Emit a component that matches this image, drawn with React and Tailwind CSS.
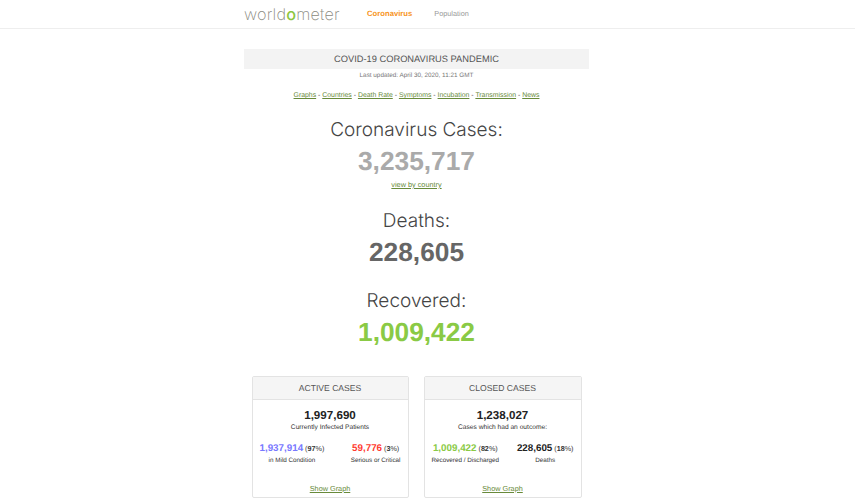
const sans = { fontFamily: '"Liberation Sans", Arial, sans-serif' };

const links = ["Graphs", "Countries", "Death Rate", "Symptoms", "Incubation", "Transmission", "News"];

const Counter = ({ title, value, color, className = "" }) => (
    <div className={`flex flex-col items-center ${className}`}>
        <h1 className="font-['Inter'] text-[19px] leading-[22px] font-light text-[#444]">{title}</h1>
        <div className={`mt-[4px] text-[26.3px] leading-[32px] font-bold ${color}`}>{value}</div>
    </div>
);

const Stat = ({ value, pct, color, label, className = "" }) => (
    <div className={`flex flex-col items-center ${className}`}>
        <div className="text-[7.2px] leading-[12px] whitespace-nowrap text-[#333]">
            <span className={`text-[9.8px] font-bold ${color}`}>{value}</span> (<b>{pct}</b>%)
        </div>
        <div className="mt-[1px] text-[6.3px] leading-[9px] whitespace-nowrap text-[#333]">{label}</div>
    </div>
);

const Panel = ({ title, total, sub, children, className = "" }) => (
    <div className={`flex h-[122px] flex-col rounded-[2px] border border-[#e3e3e3] ${className}`}>
        <div className="flex h-[23px] items-center justify-center border-b border-[#e3e3e3] bg-[#f5f5f5] text-[8.6px] text-[#555]">
            {title}
        </div>
        <div className="flex flex-1 flex-col items-center pt-[8px]">
            <div className="text-[11.6px] leading-[15px] font-bold text-[#222]">{total}</div>
            <div className="text-[6.65px] leading-[10px] text-[#333]">{sub}</div>
            <div className="mt-[10px] flex w-full justify-between px-[7px]">{children}</div>
            <a className="mt-auto mb-[3px] text-[7.3px] leading-[10px] text-[#688a3a] underline">Show Graph</a>
        </div>
    </div>
);

export default function App() {
    return (
        <div className="h-[504px] w-[855px] overflow-hidden bg-white [text-rendering:geometricPrecision]" style={sans}>
            {/* Navbar */}
            <div className="h-[29px] border-b border-[#eeeeee]">
                <div className="ml-[244px] flex h-[28px] items-center">
                    <div className="w-[123px] font-['Inter'] text-[16.2px] leading-none font-extralight tracking-[0.2px] text-[#8a8a80]">
                        world<span className="font-medium text-[#8dc63f]">o</span>meter
                    </div>
                    <a className="text-[7.7px] font-bold text-[#f7941d]">Coronavirus</a>
                    <a className="ml-[22px] text-[7.3px] text-[#999]">Population</a>
                </div>
            </div>

            <main className="ml-[244px] flex w-[345px] flex-col items-center pt-[20px]">
                <div className="flex h-[20px] w-full items-center justify-center bg-[#f3f3f3] pt-[1px] text-[9.3px] text-[#555]">
                    COVID-19 CORONAVIRUS PANDEMIC
                </div>
                <div className="mt-[2px] text-[6.35px] leading-[10px] text-[#777]">Last updated: April 30, 2020, 11:21 GMT</div>

                <div className="mt-[10px] text-[6.9px] leading-[10px] text-[#333]">
                    {links.map((link, i) => (
                        <span key={link}>
                            {i > 0 && " - "}
                            <a className="text-[#688a3a] underline">{link}</a>
                        </span>
                    ))}
                </div>

                <Counter className="mt-[18px]" title="Coronavirus Cases:" value="3,235,717" color="text-[#aaaaaa]" />
                <a className="mt-[3px] text-[7.3px] leading-[10px] text-[#688a3a] underline">view by country</a>
                <Counter className="mt-[20px]" title="Deaths:" value="228,605" color="text-[#666666]" />
                <Counter className="mt-[22px]" title="Recovered:" value="1,009,422" color="text-[#8aca45]" />

                <div className="mt-[28px] flex w-full justify-center gap-[15px]">
                    <Panel className="w-[157px]" title="ACTIVE CASES" total="1,997,690" sub="Currently Infected Patients">
                        <Stat value="1,937,914" pct="97" color="text-[#7878ff]" label="in Mild Condition" />
                        <Stat value="59,776" pct="3" color="text-[#ff3b30]" label="Serious or Critical" />
                    </Panel>
                    <Panel className="w-[158px]" title="CLOSED CASES" total="1,238,027" sub="Cases which had an outcome:">
                        <Stat value="1,009,422" pct="82" color="text-[#8aca45]" label="Recovered / Discharged" />
                        <Stat value="228,605" pct="18" color="text-[#222]" label="Deaths" />
                    </Panel>
                </div>
            </main>
        </div>
    );
}
